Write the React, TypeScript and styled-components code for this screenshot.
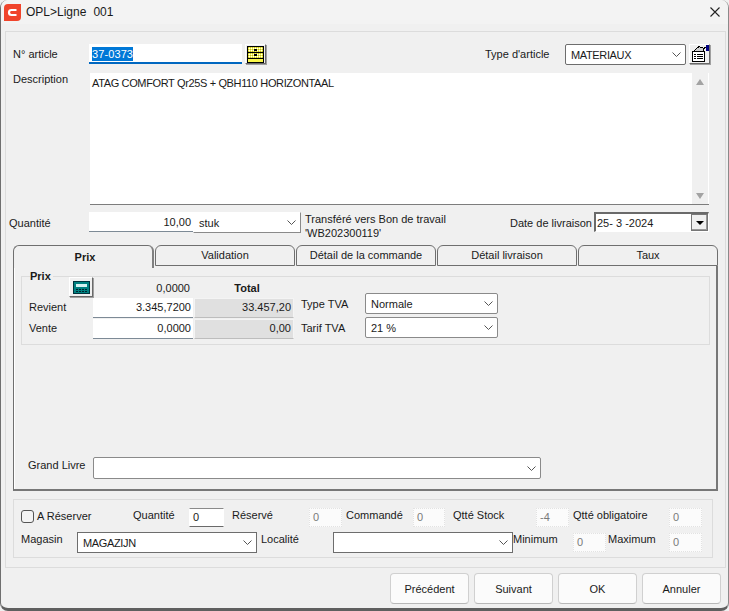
import * as React from 'react';
import styled, { createGlobalStyle } from 'styled-components';

const GlobalStyle = createGlobalStyle`
  html, body {
    margin: 0;
    padding: 0;
    background: #f0f0f0;
  }
  * {
    box-sizing: border-box;
  }
`;

const Dialog = styled.div`
  width: 729px;
  height: 611px;
  display: flex;
  flex-direction: column;
  background: #f0f0f0;
  border-left: 1px solid #6f6f6f;
  border-bottom: 3px solid #5f5f5f;
  border-right: 1px solid #8a8a8a;
  border-radius: 8px;
  font-family: "Liberation Sans", Arial, sans-serif;
  font-size: 11px;
  color: #1a1a1a;
  overflow: hidden;
`;

const TitleBar = styled.div`
  height: 24px;
  flex: none;
  display: flex;
  align-items: center;
  padding: 0 8px 0 3px;
  background: #f3f3f3;
  font-size: 12px;
`;

const TitleText = styled.span`
  margin-left: 5px;
  flex: 1;
  white-space: pre;
  word-spacing: -1px;
`;

const MainPanel = styled.div`
  margin: 7px 2px 0 4px;
  height: 537px;
  flex: none;
  border: 1px solid #dcdcdc;
  padding: 12px 0 0 7px;
`;

const Row = styled.div<{ $h: number }>`
  display: flex;
  align-items: flex-start;
  height: ${p => p.$h}px;
`;

const Label = styled.div<{ $w?: number; $ml?: number; $mt?: number }>`
  flex: none;
  width: ${p => (p.$w ? `${p.$w}px` : 'auto')};
  margin-left: ${p => p.$ml ?? 0}px;
  margin-top: ${p => p.$mt ?? 4}px;
  white-space: nowrap;
`;

const ArticleInput = styled.div`
  width: 153px;
  height: 20px;
  background: #fff;
  border-bottom: 2px solid #0067c0;
  padding: 4px 2px 0 3px;
`;

const Selected = styled.span`
  background: #0078d7;
  color: #fff;
  padding: 1px 0;
  letter-spacing: 0.1px;
`;

const IconButton = styled.button<{ $w: number; $h: number; $ml: number }>`
  flex: none;
  width: ${p => p.$w}px;
  height: ${p => p.$h}px;
  margin-left: ${p => p.$ml}px;
  padding: 0;
  display: flex;
  align-items: center;
  justify-content: center;
  background: #f0f0f0;
  border: 1px solid;
  border-color: #ffffff #6a6a6a #6a6a6a #ffffff;
  box-shadow: 1px 1px 0 #a0a0a0;
`;

const Select = styled.div<{ $w: number; $h?: number; $ml?: number; $sharp?: boolean; $dark?: boolean; $open?: boolean }>`
  flex: none;
  width: ${p => p.$w}px;
  height: ${p => p.$h ?? 21}px;
  margin-left: ${p => p.$ml ?? 0}px;
  display: flex;
  align-items: center;
  justify-content: space-between;
  padding: 0 4px 0 5px;
  background: #fff;
  border: 1px solid ${p => (p.$dark ? '#6d6d6d' : '#8a8a8a')};
  border-radius: ${p => (p.$sharp ? 0 : 2)}px;
  ${p => (p.$open ? 'border-color: #fff #8a8a8a #8a8a8a #fff;' : '')}
`;

const DescArea = styled.div`
  width: 619px;
  height: 132px;
  display: flex;
  justify-content: space-between;
  background: #fff;
  border-bottom: 1px solid #7d7d7d;
  padding: 4px 0 0 2px;
`;

const CapsText = styled.span`
  letter-spacing: -0.36px;
`;

const ScrollBar = styled.div`
  width: 17px;
  margin-top: -4px;
  background: #f0f0f0;
  display: flex;
  flex-direction: column;
  justify-content: space-between;
  align-items: center;
  padding: 6px 0 5px;
  border-right: 1px solid #fff;
`;

const ArrowUp = styled.div`
  width: 0;
  height: 0;
  border-left: 4px solid transparent;
  border-right: 4px solid transparent;
  border-bottom: 6px solid #a3a3a3;
`;

const ArrowDown = styled(ArrowUp)`
  border-bottom: 0;
  border-top: 6px solid #a3a3a3;
`;

const NumberField = styled.div<{ $w: number; $grey?: boolean; $ml?: number; $lift?: boolean }>`
  flex: none;
  width: ${p => p.$w}px;
  height: 20px;
  margin-left: ${p => p.$ml ?? 0}px;
  padding: 0 2px ${p => (p.$lift ? 2 : 0)}px;
  display: flex;
  align-items: center;
  justify-content: flex-end;
  background: ${p => (p.$grey ? '#e0e0e0' : '#fff')};
  border-bottom: 1px solid #7d8a96;
  ${p => (p.$grey ? 'border: 1px solid #f4f4f4; border-bottom-color: #bdbdbd;' : '')}
`;

const TransferNote = styled.div`
  margin: 0 0 0 4px;
  width: 205px;
  line-height: 14px;
  flex: none;
`;

const DateBox = styled.div`
  flex: none;
  width: 115px;
  height: 20px;
  display: flex;
  align-items: center;
  justify-content: space-between;
  padding-left: 1px;
  background: #fff;
  border: 1px solid #fff;
  border-left: 2px solid #6a6a6a;
  border-top: 2px solid #6a6a6a;
`;

const DateButton = styled.div`
  width: 17px;
  height: 17px;
  display: flex;
  align-items: center;
  justify-content: center;
  background: #f0f0f0;
  border: 1px solid #777;
  box-shadow: inset -1px -1px 0 #999;
`;

const BlackArrow = styled.div`
  width: 0;
  height: 0;
  border-left: 4px solid transparent;
  border-right: 4px solid transparent;
  border-top: 4px solid #000;
`;

const TabStrip = styled.div`
  display: flex;
  width: 705px;
  height: 21px;
  margin-top: 13px;
`;

const Tab = styled.div<{ $active?: boolean; $w: number }>`
  flex: none;
  width: ${p => p.$w}px;
  height: ${p => (p.$active ? 23 : 21)}px;
  margin-right: 1px;
  padding: ${p => (p.$active ? '0 0 1px 4px' : '0 0 2px')};
  display: flex;
  align-items: center;
  justify-content: center;
  font-weight: ${p => (p.$active ? 700 : 400)};
  background: #f0f0f0;
  border: 1px solid #6f6f6f;
  border-bottom: ${p => (p.$active ? 'none' : '1px solid #6f6f6f')};
  border-right: ${p => (p.$active ? '2px solid #808080' : '1px solid #6f6f6f')};
  border-radius: 6px 6px 0 0;
  position: relative;
  z-index: ${p => (p.$active ? 1 : 0)};
`;

const TabBody = styled.div`
  width: 705px;
  height: 225px;
  display: flex;
  flex-direction: column;
  border-left: 1px solid #6f6f6f;
  border-right: 2px solid #777;
  border-bottom: 2px solid #777;
  box-shadow: inset 1px 0 0 #fff;
  padding: 4px 0 0 7px;
`;

const GroupBox = styled.fieldset`
  width: 689px;
  height: 75px;
  flex: none;
  margin: 0;
  padding: 0 0 0 7px;
  border: 1px solid #dcdcdc;
  min-inline-size: 0;
`;

const GroupLegend = styled.legend`
  padding: 0 2px 0 0;
  margin-left: 1px;
  font-weight: 700;
  line-height: 12px;
`;

const PriceGrid = styled.div`
  display: flex;
  margin-top: -5px;
`;

const PriceColumn = styled.div`
  width: 272px;
  flex: none;
  display: flex;
  flex-direction: column;
`;

const PriceRow = styled.div<{ $h: number }>`
  display: flex;
  height: ${p => p.$h}px;
  align-items: flex-start;
`;

const Plain = styled.div<{ $w: number; $ml?: number; $bold?: boolean; $align?: string; $mt?: number }>`
  flex: none;
  width: ${p => p.$w}px;
  margin-left: ${p => p.$ml ?? 0}px;
  margin-top: ${p => p.$mt ?? 0}px;
  font-weight: ${p => (p.$bold ? 700 : 400)};
  text-align: ${p => p.$align ?? 'left'};
`;

const TvaColumn = styled.div`
  margin-top: 16px;
  display: flex;
  flex-direction: column;
  gap: 3px;
`;

const TvaRow = styled.div`
  display: flex;
  align-items: flex-start;
`;

const LedgerRow = styled.div`
  display: flex;
  margin-top: 112px;
`;

const BottomGroup = styled.div`
  width: 700px;
  height: 59px;
  margin-top: 8px;
  border: 1px solid #dcdcdc;
  padding: 8px 0 0 7px;
`;

const SmallField = styled.div<{ $w?: number; $ml?: number; $mt?: number; $active?: boolean }>`
  flex: none;
  width: ${p => p.$w ?? 33}px;
  height: 19px;
  margin-left: ${p => p.$ml ?? 0}px;
  margin-top: ${p => p.$mt ?? 0}px;
  padding: 2px 0 0 3px;
  background: ${p => (p.$active ? '#fff' : '#fbfbfb')};
  color: ${p => (p.$active ? '#1a1a1a' : '#7a7a7a')};
  border: 1px dotted #e2e2e2;
  ${p => (p.$active ? 'border: 1px solid #fff; border-top-color: #8a8a8a; border-bottom-color: #6a6a6a;' : '')}
`;

const CheckBox = styled.div`
  flex: none;
  width: 13px;
  height: 13px;
  margin-top: 2px;
  background: #f4f4f4;
  border: 1px solid #555;
  border-radius: 3px;
`;

const Footer = styled.div`
  display: flex;
  justify-content: flex-end;
  gap: 5px;
  padding: 5px 7px 0 0;
`;

const FooterButton = styled.button`
  width: 79px;
  height: 31px;
  font-family: inherit;
  font-size: 11px;
  color: #1a1a1a;
  background: #fbfbfb;
  border: 1px solid #d0d0d0;
  border-bottom-color: #b8b8b8;
  border-radius: 4px;
`;

const Chevron = () => (
  <svg width="9" height="5" viewBox="0 0 9 5" fill="none">
    <path d="M0.5 0.5 L4.5 4.5 L8.5 0.5" stroke="#555" strokeWidth="1" />
  </svg>
);

const LogoIcon = () => (
  <svg width="17" height="17" viewBox="0 0 17 17">
    <path d="M4 0 H17 V13 Q17 17 13 17 H0 V4 Q0 0 4 0 Z" fill="#f0442b" />
    <path d="M12.5 6 H7.5 Q5 6 5 8.5 Q5 11 7.5 11 H12.5" fill="none" stroke="#fff" strokeWidth="2.2" />
  </svg>
);

const DrawerIcon = () => (
  <svg width="17" height="17" viewBox="0 0 17 17" shapeRendering="crispEdges">
    <defs>
      <pattern id="dither" width="2" height="2" patternUnits="userSpaceOnUse">
        <rect width="2" height="2" fill="#fbf84a" />
        <rect width="1" height="1" fill="#fff" />
        <rect x="1" y="1" width="1" height="1" fill="#b8b430" />
      </pattern>
    </defs>
    <rect x="0.5" y="0.5" width="16" height="16" fill="url(#dither)" stroke="#000" />
    <rect x="1" y="6" width="15" height="1" fill="#000" />
    <rect x="1" y="12" width="15" height="1" fill="#000" />
    <rect x="1" y="13" width="15" height="3" fill="#fbf84a" />
    <rect x="7" y="3" width="3" height="2" fill="#000" />
    <rect x="7" y="8" width="3" height="2" fill="#000" />
  </svg>
);

const FormIcon = () => (
  <svg width="18" height="18" viewBox="0 0 18 18" shapeRendering="crispEdges">
    <rect x="1.5" y="6.5" width="12" height="10" fill="#fff" stroke="#000" />
    <path d="M3 9.5 H4.5 M6 9.5 H11.5 M3 11.5 H4.5 M6 11.5 H11.5 M3 13.5 H4.5 M6 13.5 H11.5" stroke="#000" />
    <path d="M3 6 L8 1.5 L13 3.5 L12 6 Z" fill="#cfcfcf" stroke="#000" />
    <rect x="13" y="2" width="3" height="1" fill="#000" />
    <rect x="15" y="0" width="3" height="6" fill="#000080" />
  </svg>
);

const CalcIcon = () => (
  <svg width="17" height="13" viewBox="0 0 17 13" shapeRendering="crispEdges">
    <rect x="0.5" y="0.5" width="16" height="12" fill="#008080" stroke="#00323c" />
    <rect x="3" y="3" width="11" height="3" fill="#d6f2f2" />
    <path d="M3 8.5 H14 M3 10.5 H14" stroke="#00222c" strokeDasharray="2 1" />
  </svg>
);

const CloseIcon = () => (
  <svg width="10" height="10" viewBox="0 0 10 10" fill="none">
    <path d="M0.5 0.5 L9.5 9.5 M9.5 0.5 L0.5 9.5" stroke="#222" strokeWidth="1.1" />
  </svg>
);

const tabs = [
  { label: 'Prix', w: 141, active: true },
  { label: 'Validation', w: 140 },
  { label: 'Détail de la commande', w: 140 },
  { label: 'Détail livraison', w: 140 },
  { label: 'Taux', w: 140 },
];

export default function App() {
  return (
    <>
      <GlobalStyle />
      <Dialog>
        <TitleBar>
          <LogoIcon />
          <TitleText>OPL&gt;Ligne   001</TitleText>
          <CloseIcon />
        </TitleBar>

        <MainPanel>
          <Row $h={29}>
            <Label $w={76}>N° article</Label>
            <ArticleInput><Selected>37-0373</Selected></ArticleInput>
            <IconButton $w={21} $h={20} $ml={3}><DrawerIcon /></IconButton>
            <Label $w={80} $ml={219}>Type d'article</Label>
            <Select $w={121} $dark><CapsText>MATERIAUX</CapsText><Chevron /></Select>
            <IconButton $w={21} $h={20} $ml={3}><FormIcon /></IconButton>
          </Row>

          <Row $h={139}>
            <Label $w={77} $mt={0}>Description</Label>
            <DescArea>
              <CapsText>ATAG COMFORT Qr25S + QBH110 HORIZONTAAL</CapsText>
              <ScrollBar><ArrowUp /><ArrowDown /></ScrollBar>
            </DescArea>
          </Row>

          <Row $h={20}>
            <Label $w={80} $ml={-4} $mt={5}>Quantité</Label>
            <NumberField $w={104}>10,00</NumberField>
            <Select $w={108} $dark $sharp $open><span>stuk</span><Chevron /></Select>
            <TransferNote>Transféré vers Bon de travail<br />'WB202300119'</TransferNote>
            <Label $w={84} $mt={5}>Date de livraison</Label>
            <DateBox>25- 3 -2024<DateButton><BlackArrow /></DateButton></DateBox>
          </Row>

          <TabStrip>
            {tabs.map(t => (
              <Tab key={t.label} $w={t.w} $active={t.active}>{t.label}</Tab>
            ))}
          </TabStrip>

          <TabBody>
            <GroupBox>
              <GroupLegend>Prix</GroupLegend>
              <PriceGrid>
                <PriceColumn>
                  <PriceRow $h={21}>
                    <IconButton $w={24} $h={20} $ml={40}><CalcIcon /></IconButton>
                    <Plain $w={97} $align="right" $mt={5}>0,0000</Plain>
                    <Plain $w={114} $bold $mt={5} $align="center">Total</Plain>
                  </PriceRow>
                  <PriceRow $h={21}>
                    <Plain $w={64} $mt={3}>Revient</Plain>
                    <NumberField $w={100} $lift>3.345,7200</NumberField>
                    <NumberField $w={100} $grey $ml={1} $lift>33.457,20</NumberField>
                  </PriceRow>
                  <PriceRow $h={20}>
                    <Plain $w={64} $mt={3}>Vente</Plain>
                    <NumberField $w={100} $lift>0,0000</NumberField>
                    <NumberField $w={100} $grey $ml={1} $lift>0,00</NumberField>
                  </PriceRow>
                </PriceColumn>
                <TvaColumn>
                  <TvaRow>
                    <Label $w={64} $mt={5}>Type TVA</Label>
                    <Select $w={133}><span>Normale</span><Chevron /></Select>
                  </TvaRow>
                  <TvaRow>
                    <Label $w={64} $mt={5}>Tarif TVA</Label>
                    <Select $w={133}><span>21 %</span><Chevron /></Select>
                  </TvaRow>
                </TvaColumn>
              </PriceGrid>
            </GroupBox>

            <LedgerRow>
              <Label $w={65} $ml={7} $mt={2}>Grand Livre</Label>
              <Select $w={448} $h={22}><span /><Chevron /></Select>
            </LedgerRow>
          </TabBody>

          <BottomGroup>
            <Row $h={24}>
              <CheckBox />
              <Label $w={96} $ml={3} $mt={2}>A Réserver</Label>
              <Label $w={56} $mt={1}>Quantité</Label>
              <SmallField $w={35} $active>0</SmallField>
              <Label $w={77} $ml={8} $mt={1}>Réservé</Label>
              <SmallField>0</SmallField>
              <Label $w={67} $ml={4} $mt={1}>Commandé</Label>
              <SmallField $w={32}>0</SmallField>
              <Label $w={83} $ml={8} $mt={1}>Qtté Stock</Label>
              <SmallField>-4</SmallField>
              <Label $w={96} $ml={4} $mt={1}>Qtté obligatoire</Label>
              <SmallField>0</SmallField>
            </Row>
            <Row $h={21}>
              <Label $w={56} $mt={1}>Magasin</Label>
              <Select $w={180} $dark $sharp><CapsText>MAGAZIJN</CapsText><Chevron /></Select>
              <Label $w={72} $ml={4} $mt={1}>Localité</Label>
              <Select $w={180} $dark $sharp><span /><Chevron /></Select>
              <Label $w={60} $mt={1}>Minimum</Label>
              <SmallField $mt={1}>0</SmallField>
              <Label $w={61} $ml={2} $mt={1}>Maximum</Label>
              <SmallField $mt={1}>0</SmallField>
            </Row>
          </BottomGroup>
        </MainPanel>

        <Footer>
          <FooterButton>Précédent</FooterButton>
          <FooterButton>Suivant</FooterButton>
          <FooterButton>OK</FooterButton>
          <FooterButton>Annuler</FooterButton>
        </Footer>
      </Dialog>
    </>
  );
}
